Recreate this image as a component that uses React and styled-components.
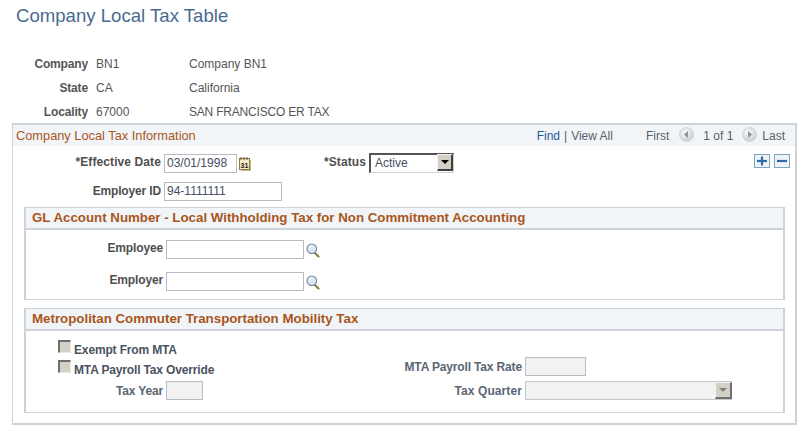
import React from "react";
import styled, { createGlobalStyle } from "styled-components";

const GlobalStyle = createGlobalStyle`
  html, body {
    margin: 0;
    padding: 0;
    background: #fff;
    font-family: "Liberation Sans", Arial, sans-serif;
    font-size: 12px;
    color: #4d4d4d;
  }
`;

const Page = styled.div`
  width: 804px;
  height: 431px;
  overflow: hidden;
  box-sizing: border-box;
  padding: 5px 7px 0 12px;
`;

const Title = styled.h1`
  margin: 0 0 0 4px;
  height: 47px;
  font-size: 18.6px;
  line-height: 21px;
  font-weight: normal;
  color: #4a6a91;
`;

const Summary = styled.div`
  display: grid;
  grid-template-columns: 76px 101px 1fr;
  grid-auto-rows: 24px;
  align-items: center;
  height: 60px;
  margin-bottom: 11px;
`;

const SummaryLabel = styled.div`
  font-weight: bold;
  text-align: right;
  letter-spacing: -0.15px;
  color: #555;
`;

const SummaryValue = styled.div`
  padding-left: ${(props) => (props.$first ? "8px" : "0")};
  letter-spacing: ${(props) => (props.$tight ? "-0.2px" : "0")};
  color: #555;
`;

const Box = styled.div`
  box-sizing: border-box;
  width: 785px;
  height: 302px;
  border: 1px solid #cdd3d8;
  border-width: 2px 2px 2px 1px;
`;

const BoxHeader = styled.div`
  display: flex;
  align-items: center;
  height: 21px;
  padding: 0 10px 0 3px;
  background: #f2f5f7;
  color: #a8561d;
`;

const BoxTitle = styled.div`
  flex: 1;
  font-size: 12.8px;
`;

const Nav = styled.div`
  display: flex;
  align-items: center;
  color: #56616e;
`;

const FindLink = styled.span`
  color: #1f5c99;
`;

const Separator = styled.span`
  margin: 0 4px;
`;

const FirstText = styled.span`
  margin-left: 33px;
`;

const NavIcon = styled.svg`
  display: block;
  width: 15px;
  height: 15px;
  margin: 0 ${(props) => props.$right}px 0 ${(props) => props.$left}px;
  position: relative;
  top: -1px;
`;

const DateRow = styled.div`
  display: grid;
  grid-template-columns: 151px 73px 15px 117px 85px 1fr;
  align-items: center;
  height: 20px;
  margin-top: 7px;
`;

const EmployerRow = styled.div`
  display: grid;
  grid-template-columns: 151px 118px;
  align-items: center;
  height: 19px;
  margin-top: 9px;
`;

const Label = styled.label`
  display: block;
  font-weight: bold;
  text-align: right;
  padding-right: 3px;
  letter-spacing: ${(props) => (props.$wide ? "0.1px" : "-0.15px")};
  color: ${(props) => (props.$muted ? "#5a6672" : "#4f4f4f")};
  position: relative;
  top: ${(props) => props.$lift || 0}px;
`;

const Field = styled.div`
  box-sizing: border-box;
  width: ${(props) => props.$w}px;
  height: 19px;
  margin-top: ${(props) => props.$mt || 0}px;
  border: 1px solid #b9bdc0;
  padding-left: 2px;
  line-height: 17px;
  color: #454f5e;
  background: ${(props) => (props.$off ? "#f2f2f2" : "#fff")};
`;

const SelectBox = styled.div`
  box-sizing: border-box;
  display: flex;
  width: 85px;
  height: 20px;
  border-style: solid;
  border-width: 2px 1px 1px 2px;
  border-color: #555 #d4d0c8 #d4d0c8 #555;
  background: #fff;
  line-height: 17px;
  padding-left: 4px;
  color: #454f5e;
`;

const SelectText = styled.div`
  flex: 1;
`;

const Arrow = styled.div`
  box-sizing: border-box;
  width: ${(props) => (props.$off ? 17 : 16)}px;
  height: 17px;
  margin-top: ${(props) => (props.$off ? 0 : -1)}px;
  background: #d4d0c8;
  border-style: solid;
  border-width: 1px 2px 2px 1px;
  border-color: ${(props) => (props.$off ? "#f4f3ef #707070 #707070 #f4f3ef" : "#f4f3ef #404040 #404040 #f4f3ef")};
  display: flex;
  align-items: center;
  justify-content: center;
  &::after {
    content: "";
    border-style: solid;
    border-width: 4px 4px 0 4px;
    border-color: ${(props) => (props.$off ? "#808080" : "#000")} transparent transparent transparent;
  }
`;

const RowActions = styled.div`
  display: flex;
  justify-content: flex-end;
  gap: 4px;
  padding-right: 5px;
  position: relative;
  top: -2px;
`;

const ActionButton = styled.svg`
  display: block;
  width: 16px;
  height: 14px;
`;

const CalendarIcon = styled.svg`
  display: block;
  width: 12px;
  height: 14px;
  margin: 1px 0 0 2px;
`;

const LookupIcon = styled.svg`
  display: block;
  width: 14px;
  height: 15px;
  margin: 2px 0 0 2px;
`;

const Section = styled.div`
  box-sizing: border-box;
  width: 761px;
  margin-left: 11px;
  margin-top: ${(props) => props.$top}px;
  height: ${(props) => props.$h}px;
  border: 1px solid #cdd3d8;
  border-width: 1px 2px 1px 2px;
`;

const SectionHeader = styled.div`
  box-sizing: border-box;
  height: 22px;
  line-height: 20px;
  padding-left: 6px;
  background: #f2f5f7;
  border-bottom: 2px solid #cdd3d8;
  font-size: 13.3px;
  font-weight: bold;
  color: #a8561d;
`;

const GlGrid = styled.div`
  display: grid;
  grid-template-columns: 140px 138px 16px;
  grid-auto-rows: 19px;
  row-gap: 13px;
  align-items: center;
  padding-top: 10px;
`;

const MtaGrid = styled.div`
  display: grid;
  grid-template-columns: 140px 120px 239px 1fr;
  grid-template-rows: 12px 19px 19px;
  row-gap: 5px;
  align-items: center;
  padding-top: 9px;
`;

const CheckRow = styled.div`
  grid-column: 1 / 3;
  align-self: start;
  display: flex;
  align-items: flex-start;
  margin-top: ${(props) => props.$mt || 0}px;
  padding-left: 32px;
  font-weight: bold;
  letter-spacing: -0.15px;
  color: #4a5360;
`;

const CheckBox = styled.span`
  box-sizing: border-box;
  display: block;
  flex: none;
  width: 13px;
  height: 13px;
  margin-right: 3px;
  background: #d4d0c8;
  border-style: solid;
  border-width: 2px 1px 1px 2px;
  border-color: #6f6f6f #ece9e2 #ece9e2 #6f6f6f;
`;

const CheckLabel = styled.span`
  position: relative;
  top: 3px;
`;

const RightLabel = styled(Label)`
  grid-column: 3;
`;

const YearCell = styled.div`
  grid-column: 2;
`;

const OffSelect = styled.div`
  box-sizing: border-box;
  display: flex;
  justify-content: flex-end;
  width: 207px;
  height: 19px;
  border: 1px solid #c4c8ca;
  border-right: none;
  background: #f2f2f2;
`;

const NavButton = ({ flip, left, right }) => (
  <NavIcon viewBox="0 0 15 15" $left={left} $right={right}>
    <defs>
      <radialGradient id={flip ? "navNext" : "navPrev"} cx="0.4" cy="0.35" r="0.7">
        <stop offset="0" stopColor="#fbfbfb" />
        <stop offset="1" stopColor="#c6c9cb" />
      </radialGradient>
    </defs>
    <circle cx="7.5" cy="7.5" r="7" fill={`url(#${flip ? "navNext" : "navPrev"})`} stroke="#d2d4d6" />
    <path d={flip ? "M6 4l4 3.5L6 11z" : "M9 4L5 7.5 9 11z"} fill="#8f9395" />
  </NavIcon>
);

const Calendar = () => (
  <CalendarIcon viewBox="0 0 12 14">
    <rect x="0.5" y="1.5" width="10" height="11" fill="#f6eac2" stroke="#8c7a44" />
    <path d="M2 0v3M5 0v3M8 0v3" stroke="#6b5b2e" />
    <path d="M11.5 3v10.5H2" fill="none" stroke="#c9b97c" />
    <text x="1.6" y="11" fontSize="7" fontWeight="bold" fontFamily="Liberation Sans" fill="#222">31</text>
  </CalendarIcon>
);

const Lookup = () => (
  <LookupIcon viewBox="0 0 14 15">
    <path d="M8.5 9.5l4 4" stroke="#8a8440" strokeWidth="2.2" strokeLinecap="round" />
    <circle cx="5.8" cy="5.8" r="4.8" fill="#d6e7f8" stroke="#76858f" strokeWidth="1.1" />
    <path d="M3.2 5.6a2.7 2.7 0 0 1 2.6-2.5" fill="none" stroke="#fff" strokeWidth="1.3" />
  </LookupIcon>
);

const Action = ({ plus }) => (
  <ActionButton viewBox="0 0 16 14">
    <rect x="0.5" y="0.5" width="15" height="13" fill="#eef3f6" stroke="#7fa6c0" />
    <path d="M3 7h10" stroke="#2f6ca8" strokeWidth="2.2" />
    {plus && <path d="M8 2.5v9" stroke="#2f6ca8" strokeWidth="2.2" />}
  </ActionButton>
);

const App = () => {
  return (
    <Page>
      <GlobalStyle />
      <Title>Company Local Tax Table</Title>
      <Summary>
        <SummaryLabel>Company</SummaryLabel>
        <SummaryValue $first>BN1</SummaryValue>
        <SummaryValue>Company BN1</SummaryValue>
        <SummaryLabel>State</SummaryLabel>
        <SummaryValue $first>CA</SummaryValue>
        <SummaryValue>California</SummaryValue>
        <SummaryLabel>Locality</SummaryLabel>
        <SummaryValue $first>67000</SummaryValue>
        <SummaryValue $tight>SAN FRANCISCO ER TAX</SummaryValue>
      </Summary>
      <Box>
        <BoxHeader>
          <BoxTitle>Company Local Tax Information</BoxTitle>
          <Nav>
            <FindLink>Find</FindLink>
            <Separator>|</Separator>
            <span>View All</span>
            <FirstText>First</FirstText>
            <NavButton left={10} right={9} />
            <span>1 of 1</span>
            <NavButton flip left={9} right={5} />
            <span>Last</span>
          </Nav>
        </BoxHeader>
        <DateRow>
          <Label $lift={-1} $wide>*Effective Date</Label>
          <Field $w={73} $mt={1}>03/01/1998</Field>
          <Calendar />
          <Label $lift={-1} $wide>*Status</Label>
          <SelectBox>
            <SelectText>Active</SelectText>
            <Arrow />
          </SelectBox>
          <RowActions>
            <Action plus />
            <Action />
          </RowActions>
        </DateRow>
        <EmployerRow>
          <Label $lift={-1}>Employer ID</Label>
          <Field $w={118}>94-1111111</Field>
        </EmployerRow>
        <Section $top={6} $h={93}>
          <SectionHeader>GL Account Number - Local Withholding Tax for Non Commitment Accounting</SectionHeader>
          <GlGrid>
            <Label $lift={-2}>Employee</Label>
            <Field $w={138} />
            <Lookup />
            <Label $lift={-2}>Employer</Label>
            <Field $w={138} />
            <Lookup />
          </GlGrid>
        </Section>
        <Section $top={8} $h={105}>
          <SectionHeader>Metropolitan Commuter Transportation Mobility Tax</SectionHeader>
          <MtaGrid>
            <CheckRow>
              <CheckBox />
              <CheckLabel>Exempt From MTA</CheckLabel>
            </CheckRow>
            <CheckRow $mt={3}>
              <CheckBox />
              <CheckLabel>MTA Payroll Tax Override</CheckLabel>
            </CheckRow>
            <RightLabel $muted>MTA Payroll Tax Rate</RightLabel>
            <Field $w={61} $off />
            <Label $muted>Tax Year</Label>
            <YearCell>
              <Field $w={37} $off />
            </YearCell>
            <RightLabel $muted $wide>Tax Quarter</RightLabel>
            <OffSelect>
              <Arrow $off />
            </OffSelect>
          </MtaGrid>
        </Section>
      </Box>
    </Page>
  );
};

export default App;
